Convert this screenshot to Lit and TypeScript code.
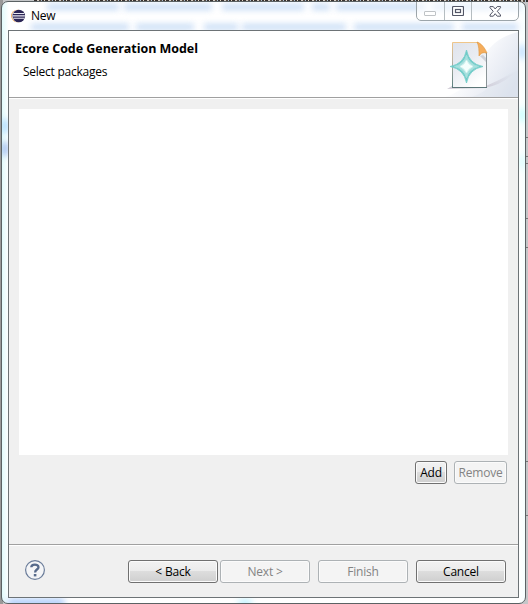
import { LitElement, html, css, svg } from "lit";
import { customElement, property } from "lit/decorators.js";

@customElement("dialog-button")
class DialogButton extends LitElement {
  @property({ type: Boolean, reflect: true }) disabled = false;
  static styles = css`
    :host { display: block; height: 23px; flex: none; }
    button {
      box-sizing: border-box; width: 100%; height: 23px; padding: 1px 0 0; margin: 0;
      display: flex; align-items: center; justify-content: center;
      border: 1px solid #707070; border-radius: 3px;
      background: linear-gradient(#f2f2f2 0, #ebebeb 48%, #dddddd 50%, #cfcfcf 100%);
      box-shadow: inset 0 0 0 1px #fbfbfb;
      font: 12px/16px "Open Sans", "Noto Sans", sans-serif; letter-spacing: -.2px; color: #000; white-space: nowrap;
    }
    button:disabled { background: #f4f4f4; border-color: #adb2b5; color: #838383; box-shadow: inset 0 0 0 1px #fbfbfb; }
  `;
  render() {
    return html`<button ?disabled=${this.disabled}><slot></slot></button>`;
  }
}

const eclipseIcon = svg`
  <svg width="15" height="14" viewBox="0 0 15 14">
    <circle cx="6.5" cy="7" r="6.3" fill="#f09a3a"/>
    <circle cx="7.2" cy="7" r="6.3" fill="#fff"/>
    <circle cx="7.8" cy="7" r="6.3" fill="#2c2655"/>
    <path d="M2.3 4.5h11M1.7 6.9h12.2M2.3 9.3h11" stroke="#e9e8f2" stroke-width="1.1"/>
  </svg>`;

const banner = svg`
  <svg width="76" height="66" viewBox="0 0 76 66">
    <defs>
      <linearGradient id="sweep" gradientUnits="userSpaceOnUse" x1="34" y1="22" x2="76" y2="48">
        <stop offset="0" stop-color="#f4f6fa" stop-opacity=".3"/>
        <stop offset=".35" stop-color="#f1f3f8"/>
        <stop offset="1" stop-color="#dde3ee"/>
      </linearGradient>
      <linearGradient id="page" x1="0" y1="0" x2=".6" y2="1">
        <stop offset="0" stop-color="#dfe3ec"/>
        <stop offset=".5" stop-color="#e9ecf2"/>
        <stop offset="1" stop-color="#fff"/>
      </linearGradient>
      <linearGradient id="edge" x1="0" y1="0" x2="0" y2="1">
        <stop offset="0" stop-color="#f0c68a"/>
        <stop offset=".4" stop-color="#b8b2a4"/>
        <stop offset="1" stop-color="#587d7d"/>
      </linearGradient>
      <linearGradient id="shade" gradientUnits="userSpaceOnUse" x1="42" y1="0" x2="74" y2="0">
        <stop offset="0" stop-color="#bfb8c6"/>
        <stop offset="1" stop-color="#d9dce8" stop-opacity=".1"/>
      </linearGradient>
    </defs>
    <path d="M76 1C60 5 49 13 43 24C32 48 20 61 3 66H76Z" fill="url(#sweep)"/>
    <path d="M76 40C65 42 59 49 49 55C42 60 36 65 28 66H76Z" fill="#dbe0eb" opacity=".3"/>
    <path d="M5 58L10 55H44L72 42Q62 53 43 57Z" fill="url(#shade)" opacity=".7"/>
    <path d="M10.500 11.500H36L44.500 23V56.500H10.500Z" fill="url(#page)" stroke="url(#edge)"/>
    <path d="M44.500 22V56" stroke="#8b9497"/>
    <path d="M10 56.500H45" stroke="#5d7779"/>
    <path d="M35 11C39 12 43 17 45 22C41 21 39 22 37 25C37 19 37 15 35 11Z" fill="#f5ad5c" stroke="#dd963f" stroke-width=".6"/>
    <path d="M38 25L41 24L44 27V31Z" fill="#b9bdc6" opacity=".6"/>
    <path d="M24.500 19Q27 33 41 35.500Q27 38 24.500 52Q22 38 8 35.500Q22 33 24.500 19Z" fill="#6ecbc8" stroke="#6ecbc8" stroke-width=".8"/>
    <path d="M24.500 24Q27 33 36.500 35.500Q27 38 24.500 47Q22 38 12.500 35.500Q22 33 24.500 24Z" fill="#a9e1df" stroke="#a0dddb"/>
    <path d="M24.500 29Q26.500 33.500 31 35.500Q26.500 37.500 24.500 42Q22.500 37.500 18 35.500Q22.500 33.500 24.500 29Z" fill="#f4fffd" stroke="#d7f4f1"/>
  </svg>`;

const helpIcon = svg`
  <svg width="22" height="22" viewBox="0 0 22 22">
    <circle cx="11" cy="11" r="9.400" fill="#f4f5f7" stroke="#6b7d9a" stroke-width="1.200"/>
    <path d="M7.300 8.300C7.300 4.700 14.500 4.600 14.500 8.200C14.500 10.500 11.100 10.600 11.100 13.400" fill="none" stroke="#576a8b" stroke-width="2.300"/>
    <rect x="9.800" y="15" width="2.600" height="2.400" fill="#576a8b"/>
  </svg>`;

const minIcon = svg`<svg width="13" height="6" viewBox="0 0 13 6"><rect x=".5" y=".5" width="11" height="4" rx=".5" fill="#fff" stroke="#bfc3c6"/></svg>`;
const maxIcon = svg`<svg width="12" height="10" viewBox="0 0 12 10"><rect x=".5" y=".5" width="11" height="9" rx="1" fill="#fff" stroke="#535666" stroke-width="1.200"/><rect x="3.500" y="3.500" width="5" height="3" fill="#fff" stroke="#535666" stroke-width="1.200"/></svg>`;
const closeIcon = svg`<svg width="13" height="11" viewBox="0 0 13 11"><path d="M1 .6H4.300L6.200 3L8.200 .6H11.500V1.700L8.300 5.300L11.500 9V10.200H8.200L6.200 7.700L4.300 10.200H1V9L4.200 5.300L1 1.700Z" fill="#fff" stroke="#535666"/></svg>`;

// Words of the page behind the glass, as [left, width] runs.
const upperRun = [[45, 72], [122, 88], [220, 82], [310, 18], [334, 90], [430, 60], [496, 22]];
const lowerRun = [[29, 98], [134, 58], [202, 34], [240, 104], [352, 100], [460, 56]];

@customElement("app-root")
class AppRoot extends LitElement {
  static styles = css`
    :host {
      display: block; position: relative; box-sizing: border-box; width: 528px; height: 604px;
      overflow: hidden; padding: 1px 2px 0 1px; color: #000;
      background: linear-gradient(90deg, #999 0 3px, #c4c6c8 3px);
      font: 12px/16px "Open Sans", "Noto Sans", sans-serif; letter-spacing: -.25px;
    }
    .behind { position: absolute; inset: 0; overflow: hidden; }
    .line {
      position: absolute; left: 34px; right: 0; top: 0; height: 2px;
      background: repeating-linear-gradient(90deg, #37312f 0 3px, #d4cdc4 3px 5px, #54483f 5px 7px, #a9bcd0 7px 8px, #37312f 8px 10px, #e1d6c4 10px 11px);
    }
    .mark { position: absolute; right: 0; width: 4px; height: 1px; background: #777; }
    .window {
      position: relative; box-sizing: border-box; height: 603px; width: 525px;
      border: 1px solid #5b6264; border-radius: 7px; overflow: hidden;
      background: linear-gradient(90deg, #e2fbfc 0, #fff 7px, #fff 517px, #f6ffff 523px);
      padding: 0 6px; display: flex; flex-direction: column;
    }
    .glass { position: absolute; inset: 0; overflow: hidden; pointer-events: none; }
    .haze { position: absolute; height: 6px; background: #b4d0f2; filter: blur(3px); opacity: .75; }
    .haze.upper { top: 2px; }
    .haze.lower { top: 22px; }
    .tint { position: absolute; filter: blur(3px); border-radius: 5px; }
    .titlebar { position: relative; height: 28px; display: flex; flex: none; align-items: flex-start; }
    .logo { display: block; margin: 7px 0 0 3px; width: 15px; height: 14px; }
    .caption { margin: 6px 0 0 5px; flex: 1; }
    .controls {
      display: flex; box-sizing: border-box; width: 103px; height: 20px; margin-top: -1px;
      border: 1px solid #9ca5aa; border-radius: 0 0 5px 5px; background: #ffffff90;
    }
    .control { display: flex; align-items: center; justify-content: center; width: 27px; box-sizing: border-box; border-right: 1px solid #b5bdc1; }
    .control.first { width: 28px; padding-top: 5px; }
    .control.last { flex: 1; border: 0; }
    .control svg { display: block; }
    .client {
      position: relative; box-sizing: border-box; height: 568px; width: 511px; flex: none;
      border: 1px solid #6d7376; background: #f0f0f0; display: flex; flex-direction: column;
    }
    .header { height: 66px; flex: none; background: #fff; border-bottom: 1px solid #a0a0a0; display: flex; justify-content: space-between; }
    .copy { padding: 10px 0 0 6px; }
    h1 { font-size: 12.500px; line-height: 16px; margin: 0 0 7px; font-weight: 700; letter-spacing: -.04px; }
    p { margin: 0; padding-left: 8px; }
    .banner { height: 66px; }
    .banner svg { display: block; }
    .body { flex: 1; border-top: 1px solid #fff; padding: 10px 10px 0; }
    .list { height: 346px; background: #fff; }
    .actions { display: flex; justify-content: flex-end; gap: 7px; padding: 6px 1px 0 0; }
    .footer { height: 53px; box-sizing: border-box; border-top: 1px solid #a0a0a0; box-shadow: inset 0 1px #fff; display: flex; padding: 15px 12px 0 15px; }
    .help { height: 22px; margin-top: -1px; }
    .help svg { display: block; }
    .nav { display: flex; margin-left: auto; }
    .wide { width: 90px; }
    .next { margin-left: 2px; }
    .finish, .cancel { margin-left: 8px; }
    .add { width: 32px; }
    .remove { width: 53px; }
  `;
  render() {
    return html`
      <div class="behind">
        <div class="line"></div>
        ${[137, 156, 163, 218, 247, 461, 515].map((y) => html`<div class="mark" style="top:${y}px"></div>`)}
      </div>
      <div class="window">
        <div class="glass">
          ${upperRun.map(([x, w]) => html`<div class="haze upper" style="left:${x}px;width:${w}px"></div>`)}
          ${lowerRun.map(([x, w]) => html`<div class="haze lower" style="left:${x}px;width:${w}px"></div>`)}
          ${[[0, 117, "#a8d8ff"], [0, 140, "#9cb9ee"], [517, 43, "#b9dcff"], [517, 106, "#c3ffff"], [517, 153, "#d9ffff"]].map(
            ([x, y, c]) => html`<div class="tint" style="left:${x}px;top:${y}px;width:6px;height:14px;background:${c}"></div>`)}
          <div class="tint" style="left:5px;top:597px;width:58px;height:7px;background:#a8c9fa"></div>
          <div class="tint" style="left:236px;top:598px;width:14px;height:6px;background:#b4efff"></div>
        </div>
        <div class="titlebar">
          <span class="logo">${eclipseIcon}</span>
          <span class="caption">New</span>
          <div class="controls">
            <span class="control first">${minIcon}</span>
            <span class="control">${maxIcon}</span>
            <span class="control last">${closeIcon}</span>
          </div>
        </div>
        <div class="client">
          <div class="header">
            <div class="copy"><h1>Ecore Code Generation Model</h1><p>Select packages</p></div>
            <div class="banner">${banner}</div>
          </div>
          <div class="body">
            <div class="list"></div>
            <div class="actions">
              <dialog-button class="add">Add</dialog-button>
              <dialog-button class="remove" disabled>Remove</dialog-button>
            </div>
          </div>
          <div class="footer">
            <div class="help">${helpIcon}</div>
            <div class="nav">
              <dialog-button class="wide">&lt; Back</dialog-button>
              <dialog-button class="wide next" disabled>Next &gt;</dialog-button>
              <dialog-button class="wide finish" disabled>Finish</dialog-button>
              <dialog-button class="wide cancel">Cancel</dialog-button>
            </div>
          </div>
        </div>
      </div>
    `;
  }
}
